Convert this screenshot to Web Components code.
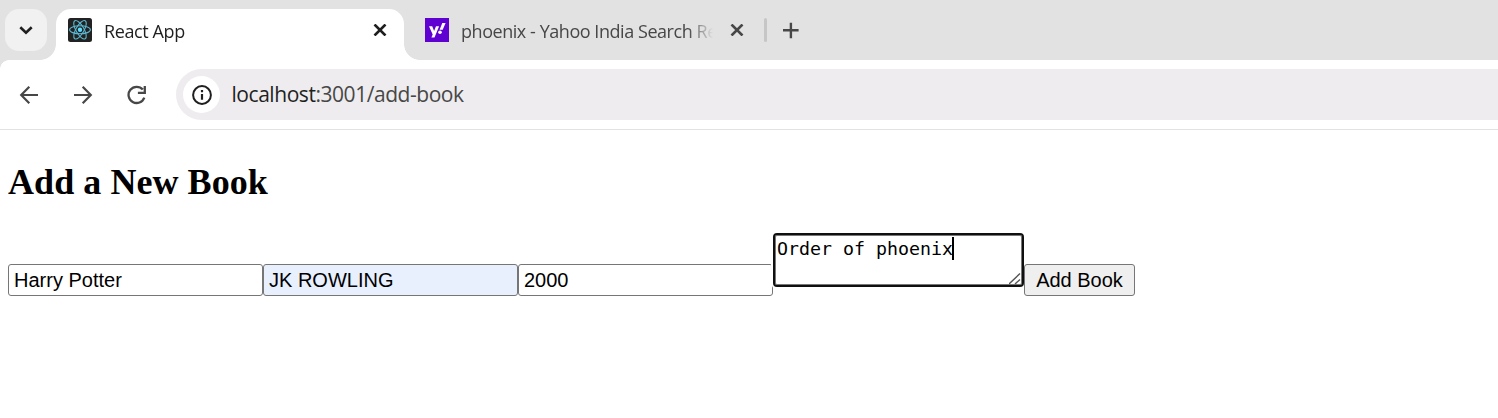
<!DOCTYPE html>
<html lang="en"><head><meta charset="utf-8"><title>React App</title>
<style>html,body{margin:0;height:418px;overflow:hidden;background:#fff}</style></head>
<body>
<browser-window>
  <tab-strip slot="tabs">
    <browser-tab active><react-logo slot="icon"></react-logo>React App</browser-tab>
    <browser-tab><yahoo-logo slot="icon"></yahoo-logo>phoenix - Yahoo India Search Results</browser-tab>
  </tab-strip>
  <nav-bar slot="nav"><span slot="host">localhost</span>:3001/add-book</nav-bar>
  <book-form>
    <span slot="title">Add a New Book</span>
    <text-field>Harry Potter</text-field>
    <text-field filled>JK ROWLING</text-field>
    <text-field>2000</text-field>
    <text-area>Order of phoenix</text-area>
    <push-button>Add Book</push-button>
  </book-form>
</browser-window>
<script>
const define = (name, html) => {
  const t = document.createElement('template');
  t.innerHTML = html;
  customElements.define(name, class extends HTMLElement {
    constructor() { super(); this.attachShadow({mode: 'open'}).append(t.content.cloneNode(true)); }
  });
};
define('browser-window', `<style>:host{display:flex;flex-direction:column;width:100%;height:418px;background:#fff}</style>
<slot name="tabs"></slot><slot name="nav"></slot><slot></slot>`);

define('tab-strip', `<style>
:host{display:flex;height:60px;flex:none;background:#e2e2e2;box-sizing:border-box;padding:9px 0 0 5px}
.search{width:42px;height:42px;border-radius:14px;background:#f1f1f1;margin-right:9px;flex:none}
.sep{width:3px;height:24px;border-radius:2px;background:#c6c6c6;margin:9px 15px 0 8px}
svg{display:block}.plus{margin-top:13px}
</style>
<div class="search"><svg width="42" height="42" fill="none" stroke="#1f1f1f" stroke-width="2.6"><path d="M15.300 18.300 21 23.800l5.700-5.500"/></svg></div>
<slot></slot><div class="sep"></div>
<svg class="plus" width="17" height="17" fill="none" stroke="#474747" stroke-width="2.4"><path d="M8.900 .7v15.600M1 8.300h15.600"/></svg>`);

define('browser-tab', `<style>
:host{display:flex;width:352px;height:51px;box-sizing:border-box;padding:9px 11px 0 21px;color:#474747;font:18px/28px "Open Sans","Noto Sans",sans-serif;letter-spacing:-.45px}
:host([active]){position:relative;width:348px;padding:9px 16px 0 12px;background:#fff;border-radius:15px 15px 0 0;color:#1f1f1f;letter-spacing:-.4px}
.label{flex:1;min-width:0;margin:-1px 0 0 12px;white-space:nowrap;overflow:hidden;-webkit-mask:linear-gradient(90deg,#000 calc(100% - 25px),transparent);mask:linear-gradient(90deg,#000 calc(100% - 25px),transparent)}
.close{flex:none;margin:6px 0 0 16px}
:host([active])::before,:host([active])::after{content:"";position:absolute;bottom:0;width:16px;height:16px}
:host([active])::before{right:100%;background:radial-gradient(circle at 0 0,transparent 15.500px,#fff 16.200px)}
:host([active])::after{left:100%;background:radial-gradient(circle at 100% 0,transparent 15.500px,#fff 16.200px)}
</style><slot name="icon"></slot><div class="label"><slot></slot></div>
<svg class="close" width="16" height="12" viewBox="0 0 16 12" fill="none" stroke="currentColor" stroke-width="2.600"><path d="m2.500.5 11 11m0-11-11 11"/></svg>`);

define('react-logo', `<style>:host{display:block;width:24px;height:24px;flex:none}svg{display:block}</style>
<svg width="24" height="24" viewBox="0 0 24 24"><rect width="24" height="24" rx="2.500" fill="#222"/><g fill="none" stroke="#5ab8d0" stroke-width="1.1"><ellipse cx="12" cy="11.800" rx="10.400" ry="4"/><ellipse cx="12" cy="11.800" rx="10.400" ry="4" transform="rotate(60 12 11.800)"/><ellipse cx="12" cy="11.800" rx="10.400" ry="4" transform="rotate(120 12 11.800)"/></g><circle cx="12" cy="11.800" r="2.200" fill="#61dafb"/></svg>`);

define('yahoo-logo', `<style>:host{display:block;width:24px;height:24px;flex:none}svg{display:block}</style>
<svg width="24" height="24" viewBox="0 0 24 24" fill="#fff"><rect width="24" height="24" fill="#5f01d1"/><path d="M4 8.300h3.200l1.900 4.700 1.900-4.700h3.100l-4.600 11.100H6.400l1.300-3zM17.300 4.900h3.300l-2.900 6.900h-3.100z"/><circle cx="15" cy="14.200" r="1.800"/></svg>`);

define('nav-bar', `<style>
:host{display:flex;align-items:center;height:70px;flex:none;box-sizing:border-box;border-bottom:1px solid #e2e2e2;padding-left:19px;background:radial-gradient(circle at 9px 9px,#fff 8.500px,#e2e2e2 9.200px) 0 0/9px 9px no-repeat,#fff}
svg{display:block;flex:none}
.nav{display:flex;gap:32px;width:157px;fill:none;stroke:#474747;stroke-width:2.2}
.box{flex:1;height:51px;border-radius:26px 0 0 26px;background:#eeecee;display:flex;align-items:center;box-sizing:border-box;padding-left:7px;font:21px/28px "Open Sans","Noto Sans",sans-serif;letter-spacing:-.45px;color:#474747;white-space:nowrap}
.info{width:37px;height:37px;border-radius:50%;background:#fff;margin-right:11.500px;flex:none}
.url{margin-top:-2px}.host{color:#1f1f1f}
</style>
<div class="nav"><svg width="21" height="20"><path d="M19 10H2.500M10.300 1.700 2.200 10l8.100 8.300"/></svg>
<svg width="21" height="20"><path d="M2 10h16.500M10.700 1.700 18.800 10l-8.100 8.300"/></svg>
<svg width="22" height="20"><path d="M17.800 4.600A8.100 8.100 0 1 0 19.300 12.600M19.800 1v6.900h-6.900" stroke-width="2.300"/></svg></div>
<div class="box"><svg class="info" viewBox="0 0 37 37"><circle cx="19" cy="19" r="8.900" fill="none" stroke="#1f1f1f" stroke-width="2"/><path d="M17.900 18h2.200v5.800h-2.200zM17.900 14h2.200v2.300h-2.200z" fill="#1f1f1f"/></svg><div class="url"><span class="host"><slot name="host"></slot></span><slot></slot></div></div>`);

define('book-form', `<style>
:host{display:block;padding:31px 8px 0;font-family:"Liberation Serif",serif;color:#000}
h2{font-size:36px;line-height:42px;letter-spacing:.06px;margin:0 0 30px;font-weight:700}
.row{display:flex;align-items:flex-start;height:63px}
</style><h2><slot name="title"></slot></h2><div class="row"><slot></slot></div>`);

define('text-field', `<style>:host{display:block;box-sizing:border-box;width:255px;height:32px;margin-top:31px;border:1px solid #767676;border-radius:3px;background:#fff;padding:0 5px;font:20px/30px "Liberation Sans",Arial,sans-serif;white-space:nowrap}
:host([filled]){background:#e8f0fe}</style><slot></slot>`);

define('text-area', `<style>:host{display:block;position:relative;box-sizing:border-box;width:251px;height:54px;border:2px solid #101010;border-radius:4px;box-shadow:0 0 0 2px #fff,inset 0 0 0 1px #777;background:#fff;padding:2px 0 0 2px;font:18.270px/25px "DejaVu Sans Mono",monospace;white-space:nowrap}
.line{display:flex;align-items:center;margin-top:-1px}.caret{width:2px;height:23px;background:#000;margin-left:-1px}
svg{position:absolute;right:0;bottom:0}</style>
<div class="line"><slot></slot><span class="caret"></span></div>
<svg width="13" height="13" fill="none" stroke="#555" stroke-width="1.400"><path d="M0 12 11 1.500M6 12l5-4.500"/></svg>`);

define('push-button', `<style>:host{display:block;position:relative;box-sizing:border-box;width:111px;height:32px;margin-top:31px;border:1px solid #767676;border-radius:3px;background:#efefef;text-align:center;font:20px/30px "Liberation Sans",Arial,sans-serif;white-space:nowrap}</style><slot></slot>`);
</script>
</body></html>
